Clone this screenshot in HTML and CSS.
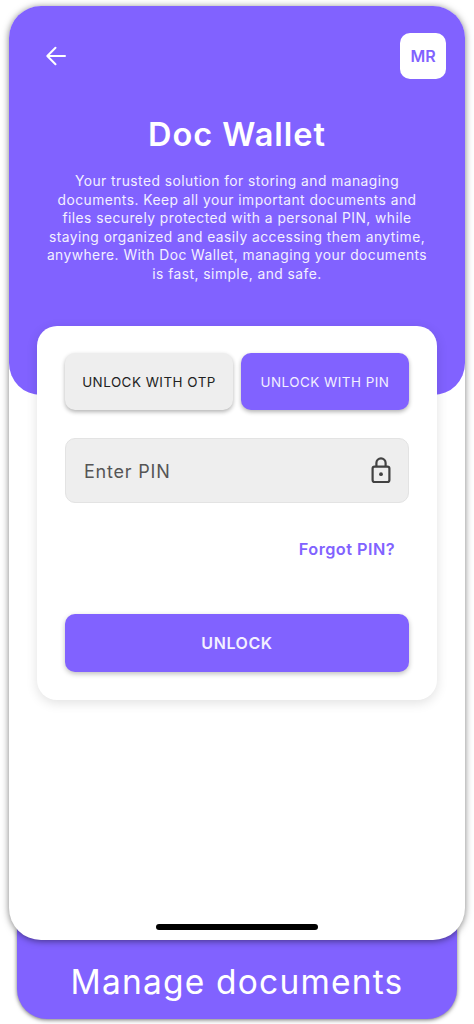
FILE: index.html

```html
<!DOCTYPE html>
<html>
<head>
    <meta http-equiv="Content-Type" content="text/html; charset=utf-8" />
    <title>Doc Wallet</title>
    <link rel="stylesheet" href="styles.css">
</head>

<body>
<div class="phone">
    <div class="hero">
        <div class="top_bar">
            <svg class="back" width="24" height="24" viewBox="0 0 24 24" fill="none" stroke="#fff" stroke-width="2" stroke-linecap="round" stroke-linejoin="round">
                <path d="M21 12H3.5M11.5 3.8L3.3 12l8.2 8.2" />
            </svg>
            <div class="avatar">MR</div>
        </div>
        <h1 class="tit">Doc Wallet</h1>
        <p class="intro">Your trusted solution for storing and managing<br />documents. Keep all your important documents and<br />files securely protected with a personal PIN, while<br />staying organized and easily accessing them anytime,<br />anywhere. With Doc Wallet, managing your documents<br />is fast, simple, and safe.</p>
    </div>
    <div class="card">
        <div class="tabs">
            <button class="tab">UNLOCK WITH OTP</button>
            <button class="tab tab_on">UNLOCK WITH PIN</button>
        </div>
        <div class="pin_field">
            <span>Enter PIN</span>
            <svg width="24" height="28" viewBox="0 0 24 28" fill="none" stroke="#424242" stroke-width="2.2">
                <rect x="3.6" y="10.6" width="16.8" height="15.4" rx="2" />
                <path d="M7.4 10.6V7a4.6 4.6 0 0 1 9.2 0v3.6" />
                <circle cx="12" cy="18.2" r="1.9" fill="#424242" stroke="none" />
            </svg>
        </div>
        <a class="forgot">Forgot PIN?</a>
        <button class="unlock">UNLOCK</button>
    </div>
    <div class="home_bar"></div>
</div>
<div class="banner">Manage documents</div>
</body>
</html>
```

FILE: styles.css

```css
* {box-sizing:border-box;}
html,body {height:1024px;overflow:hidden;}
body {margin:0;padding-top:6px;font-family:Inter, "Liberation Sans", sans-serif;background-color:#FFFFFF;}
.phone {position:relative;z-index:1;display:flex;flex-direction:column;width:456px;height:934px;margin-left:9px;border-radius:32px;background-color:#FFFFFF;box-shadow:0 1px 7px rgba(0,0,0,.5);}
.hero {height:389px;padding:27px 19px 0 24px;border-radius:32px;color:#FFFFFF;text-align:center;background-color:#8162FF;}
.top_bar {display:flex;justify-content:space-between;align-items:center;height:46px;}
.back {margin-left:11px;}
.avatar {width:46px;height:46px;line-height:46px;border-radius:10px;font-weight:600;font-size:16px;color:#8162FF;background-color:#FFFFFF;}
.tit {margin:36px 0 0 -5px;line-height:40px;font-weight:600;font-size:32.5px;letter-spacing:1px;}
.intro {margin:17px 0 0 -5px;line-height:18.6px;font-size:13.8px;letter-spacing:.47px;color:#F3F0FF;white-space:nowrap;}
.card {align-self:center;width:400px;height:374px;margin-top:-69px;padding:27px 28px 28px;border-radius:20px;background-color:#FFFFFF;box-shadow:0 3px 12px rgba(0,0,0,.12);}
.tabs {display:flex;gap:8px;}
.tab {flex:1;height:57px;padding:0;border:0 none;border-radius:10px;font-family:inherit;font-weight:400;font-size:13.4px;letter-spacing:.5px;color:#222222;background-color:#EEEEEE;box-shadow:0 2px 4px rgba(0,0,0,.3);}
.tab_on {color:#F3F0FF;background-color:#8162FF;}
.pin_field {display:flex;justify-content:space-between;align-items:center;height:65px;margin-top:28px;padding:0 15px 0 18px;border:1px solid #E3E3E3;border-radius:10px;font-size:18px;letter-spacing:.8px;color:#555555;background-color:#EEEEEE;}
.pin_field span {margin-top:2px;}
.pin_field svg {margin-bottom:2px;}
.forgot {display:block;margin-top:36px;padding-right:14px;line-height:20px;text-align:right;font-weight:600;font-size:16.3px;letter-spacing:.45px;color:#8162FF;}
.unlock {display:block;width:100%;height:58px;margin-top:55px;border:0 none;border-radius:10px;font-family:inherit;font-weight:600;font-size:16px;letter-spacing:.6px;color:#F3F0FF;background-color:#8162FF;box-shadow:0 2px 5px rgba(0,0,0,.25);}
.home_bar {align-self:center;width:162px;height:6px;margin-top:auto;margin-bottom:10px;border-radius:3px;background-color:#000000;}
.banner {width:440px;height:90px;margin:-11px 0 0 17px;padding-top:25px;border-radius:0 0 30px 30px;text-align:center;line-height:56px;font-size:33.5px;letter-spacing:1.2px;color:#FFFFFF;background-color:#8162FF;box-shadow:0 1px 4px rgba(0,0,0,.55);}
```
